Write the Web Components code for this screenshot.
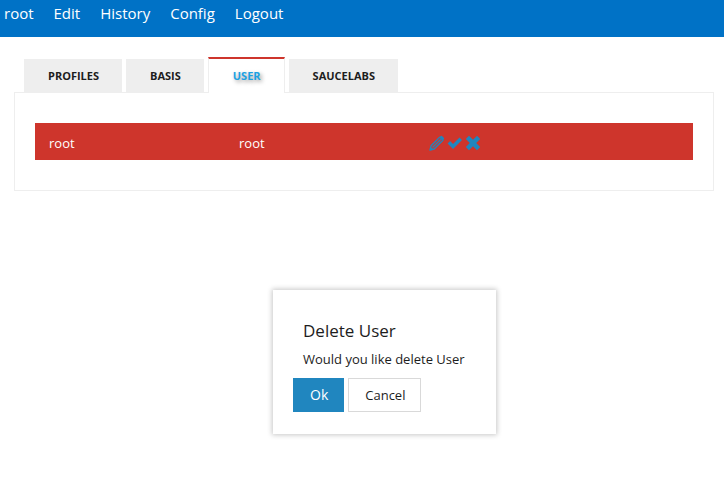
<!DOCTYPE html>
<html lang="en">
<head>
<meta charset="utf-8">
<title>User configuration</title>
<style>
  body { margin: 0; background: #fff; color: #1d1d1d; font: 13px/20px "Open Sans", "Noto Sans", sans-serif; }
</style>
</head>
<body>
<app-page></app-page>
<script>
const define = (name, html, setup) => customElements.define(name, class extends HTMLElement {
  constructor() {
    super();
    this.attachShadow({ mode: "open" }).innerHTML = html;
  }
  connectedCallback() { if (setup) setup(this, this.shadowRoot); }
});

define("nav-link", `
  <style>
    :host { display: block; }
    a { color: #fff; text-decoration: none; white-space: nowrap; }
  </style>
  <a href="#"><slot></slot></a>`);

define("nav-bar", `
  <style>
    :host { display: block; background: #0072c6; }
    nav { display: flex; gap: 20px; padding: 3px 4px 14px; font-size: 15px; line-height: 20px; }
  </style>
  <nav><slot></slot></nav>`);

define("tab-item", `
  <style>
    :host { display: block; }
    button {
      display: block; border: 0; margin: 0; padding: 8px 23px 8px 24px; background: #eee; color: #1d1d1d;
      font: bold 11px/17px "Open Sans", "Noto Sans", sans-serif; cursor: pointer; white-space: nowrap;
    }
    :host([active]) { margin-bottom: -1px; }
    :host([active]) button {
      background: #fff; color: #1ba1e2; border: solid #eee; border-width: 2px 1px 0;
      border-top-color: #ce352c; padding-bottom: 9px; text-shadow: 2px 2px 4px rgba(0,0,0,.4);
    }
  </style>
  <button type="button" role="tab"><slot></slot></button>`,
  (el, root) => root.querySelector("button").setAttribute("aria-selected", el.hasAttribute("active")));

define("tab-panel", `
  <style>
    :host { display: block; }
    .tabs { display: flex; align-items: flex-end; gap: 4px; padding-left: 10px; position: relative; }
    .frame { border: 1px solid #eee; padding: 30px 20px; }
  </style>
  <div class="tabs" role="tablist"><slot name="tab"></slot></div>
  <div class="frame" role="tabpanel"><slot></slot></div>`);

define("icon-button", `
  <style>
    :host { display: block; }
    button { display: block; border: 0; margin: 0; padding: 0; background: none; color: #2086bf; cursor: pointer; }
    svg { display: block; width: 16px; height: 16px; fill: currentColor; }
  </style>
  <button type="button"><svg viewBox="0 0 16 16" aria-hidden="true"></svg></button>`,
  (el, root) => {
    const shapes = {
      edit: '<path d="M1 15 2 10.8 10.7 2.1 13.9 5.3 5.2 14Z" fill="none" stroke="#2086bf" stroke-width="1.3" stroke-linejoin="round"/><path d="M3.6 12.4 11.8 4.2" stroke="#2086bf" stroke-width="1.3"/><path d="M1 15 1.8 12 4 14.2ZM10.8 1.9 11.7 1Q12.5.4 13.3 1.2L14.8 2.7Q15.5 3.5 14.9 4.3L14 5.2Z"/>',
      accept: '<path d="M.6 8.5 3.1 6 6 8.9 12.5 2.5 15 5 6 14Z"/>',
      remove: '<path d="M4 .8 8 4.8 12 .8 15.2 4 11.2 8 15.2 12 12 15.2 8 11.2 4 15.2 .8 12 4.8 8 .8 4Z"/>'
    };
    root.querySelector("svg").innerHTML = shapes[el.getAttribute("icon")];
    root.querySelector("button").setAttribute("aria-label", el.getAttribute("label"));
  });

define("user-table", `
  <style>
    :host { display: block; }
    table { width: 100%; table-layout: fixed; border-collapse: collapse; background: #ce352c; color: #fff; }
    col.field { width: 190px; }
    td { padding: 10px 14px 7px; line-height: 20px; vertical-align: middle; }
    .actions { display: flex; gap: 2px; }
  </style>
  <table>
    <colgroup><col class="field"><col class="field"><col></colgroup>
    <tbody><tr>
      <td>root</td><td>root</td>
      <td><div class="actions">
        <icon-button icon="edit" label="Edit user"></icon-button>
        <icon-button icon="accept" label="Select user"></icon-button>
        <icon-button icon="remove" label="Delete user"></icon-button>
      </div></td>
    </tr></tbody>
  </table>`);

define("action-button", `
  <style>
    :host { display: block; }
    button {
      display: block; height: 34px; margin: 0; padding: 0 15px 0 16px; border: 1px solid #d9d9d9;
      background: #fff; color: #1d1d1d; font: 13px/20px "Open Sans", "Noto Sans", sans-serif; cursor: pointer;
    }
    :host([primary]) button { background: #2086bf; border-color: #2086bf; color: #fff; font-size: 14px; }
  </style>
  <button type="button"><slot></slot></button>`);

define("confirm-dialog", `
  <style>
    :host { position: absolute; left: 273px; top: 290px; background: #fff; box-shadow: 0 0 5px 1px rgba(0,0,0,.22); }
    section { padding: 30px 21px 22px 20px; }
    h2, p { margin: 0 10px; font-weight: normal; white-space: nowrap; }
    h2 { font-size: 17px; line-height: 22px; }
    p { margin-top: 7px; font-size: 13px; line-height: 20px; }
    .buttons { display: flex; gap: 4px; margin-top: 9px; }
  </style>
  <section role="dialog" aria-labelledby="title">
    <h2 id="title"><slot name="title"></slot></h2>
    <p><slot></slot></p>
    <div class="buttons">
      <action-button primary>Ok</action-button>
      <action-button>Cancel</action-button>
    </div>
  </section>`);

define("app-page", `
  <style>
    :host { display: block; }
    main { padding: 20px 10px 0 14px; }
  </style>
  <nav-bar>
    <nav-link>root</nav-link><nav-link>Edit</nav-link><nav-link>History</nav-link><nav-link>Config</nav-link><nav-link>Logout</nav-link>
  </nav-bar>
  <main>
    <tab-panel>
      <tab-item slot="tab">PROFILES</tab-item>
      <tab-item slot="tab">BASIS</tab-item>
      <tab-item slot="tab" active>USER</tab-item>
      <tab-item slot="tab">SAUCELABS</tab-item>
      <user-table></user-table>
    </tab-panel>
  </main>
  <confirm-dialog><span slot="title">Delete User</span>Would you like delete User</confirm-dialog>`);
</script>
</body>
</html>
